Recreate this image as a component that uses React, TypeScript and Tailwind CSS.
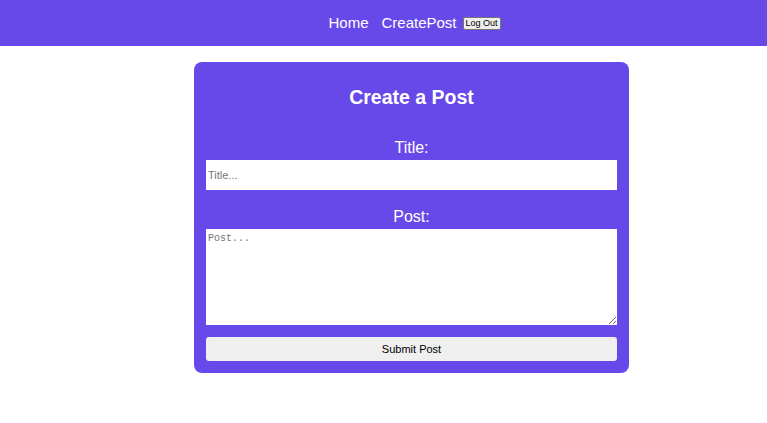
import React from 'react';

const App: React.FC = () => {
  return (
    <div className="min-h-[423px] bg-white" style={{ fontFamily: '"Liberation Sans", Arial, sans-serif' }}>
      <nav className="h-[46px] w-full bg-[#6749e9] flex items-center justify-center pl-[62px]">
        <a className="text-white text-[15px] leading-[18px] mr-[13px]">Home</a>
        <a className="text-white text-[15px] leading-[18px] mr-[6px]">CreatePost</a>
        <button className="h-[13px] w-[38px] text-[9px] leading-[10px] text-black bg-[#efefef] border border-[#767676] rounded-[2px]">
          Log Out
        </button>
      </nav>

      <div className="flex justify-center pl-[56px] pt-[16px]">
        <div className="w-[435px] bg-[#6749e9] rounded-[8px] px-[12px] pt-[23px] pb-[12px] flex flex-col">
          <h1 className="text-white text-[19.5px] leading-[24px] font-bold text-center">Create a Post</h1>

          <label className="mt-[30px] text-white text-[16px] leading-[18px] text-center">Title:</label>
          <input
            placeholder="Title..."
            className="mt-[3px] h-[30px] w-full bg-white border-0 outline-none px-[2px] text-[11px] text-black placeholder:text-[#757575]"
          />

          <label className="mt-[18px] text-white text-[16px] leading-[18px] text-center">Post:</label>
          <textarea
            placeholder="Post..."
            className="mt-[3px] h-[96px] w-full bg-white border-0 outline-none px-[2px] py-[2px] text-[10px] text-black placeholder:text-[#757575]"
            style={{ fontFamily: '"Liberation Mono", "Courier New", monospace', resize: 'both' }}
          />

          <button className="mt-[12px] h-[24px] w-full bg-[#efefef] rounded-[3px] text-[11px] text-black">
            Submit Post
          </button>
        </div>
      </div>
    </div>
  );
};

export default App;
